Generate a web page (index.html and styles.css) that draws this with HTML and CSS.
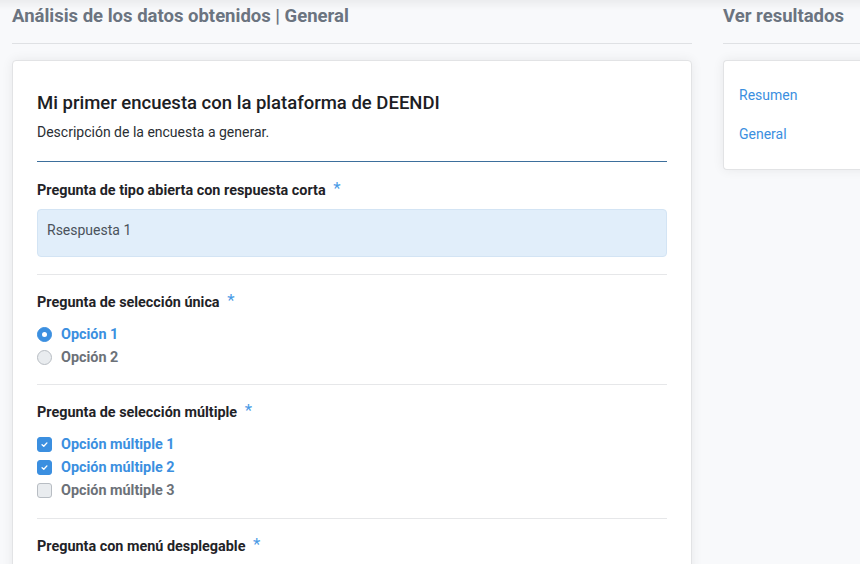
FILE: index.html
```html
<!DOCTYPE html>
<html lang="es">
<head>
<meta charset="utf-8">
<title>Análisis de los datos obtenidos</title>
<link rel="stylesheet" href="styles.css">
</head>
<body>
<div class="page">
  <main class="main-col">
    <h2 class="section-title">Análisis de los datos obtenidos | General</h2>
    <hr class="section-rule">
    <div class="card survey">
      <h1 class="survey-title">Mi primer encuesta con la plataforma de DEENDI</h1>
      <p class="survey-desc">Descripción de la encuesta a generar.</p>
      <div class="survey-rule"></div>

      <div class="question">
        <div class="q-label">Pregunta de tipo abierta con respuesta corta <span class="req">*</span></div>
        <div class="answer-box">Rsespuesta 1</div>
      </div>

      <div class="question">
        <div class="q-label">Pregunta de selección única <span class="req">*</span></div>
        <div class="options">
          <div class="opt checked"><span class="radio"></span>Opción 1</div>
          <div class="opt"><span class="radio"></span>Opción 2</div>
        </div>
      </div>

      <div class="question q-multi">
        <div class="q-label">Pregunta de selección múltiple <span class="req">*</span></div>
        <div class="options">
          <div class="opt checked"><span class="check"><svg viewBox="0 0 10 10" width="9" height="9"><path d="M2.3 5.2 L4.2 7 L7.7 3.2" fill="none" stroke="#fff" stroke-width="1.5" stroke-linecap="round" stroke-linejoin="round"/></svg></span>Opción múltiple 1</div>
          <div class="opt checked"><span class="check"><svg viewBox="0 0 10 10" width="9" height="9"><path d="M2.3 5.2 L4.2 7 L7.7 3.2" fill="none" stroke="#fff" stroke-width="1.5" stroke-linecap="round" stroke-linejoin="round"/></svg></span>Opción múltiple 2</div>
          <div class="opt"><span class="check"></span>Opción múltiple 3</div>
        </div>
      </div>

      <div class="question last">
        <div class="q-label">Pregunta con menú desplegable <span class="req">*</span></div>
      </div>
    </div>
  </main>
  <aside class="side-col">
    <h2 class="section-title">Ver resultados</h2>
    <hr class="section-rule">
    <div class="card side-card">
      <a class="side-link" href="#">Resumen</a>
      <a class="side-link" href="#">General</a>
    </div>
  </aside>
</div>
</body>
</html>
```
FILE: styles.css
```css
* { box-sizing: border-box; }
html, body { height: 100%; }
body {
  margin: 0;
  overflow: hidden;
  font-family: Roboto, "Liberation Sans", sans-serif;
  background: #f8f9fb;
  color: #212529;
}
body::before {
  content: "";
  position: fixed;
  left: 0; right: 0; top: 0;
  height: 10px;
  background: linear-gradient(rgba(0,0,0,0.05), rgba(0,0,0,0));
  pointer-events: none;
}
.page {
  display: flex;
  padding-left: 12px;
  gap: 31px;
}
.main-col { width: 680px; flex: none; }
.side-col { width: 170px; flex: none; }
.section-title {
  margin: 0;
  padding-top: 4px;
  font-size: 18.5px;
  line-height: 24px;
  font-weight: 700;
  color: #6b7480;
  white-space: nowrap;
}
.section-rule {
  margin: 15px 0 16px;
  border: 0;
  border-top: 1px solid #dfe1e4;
}
.card {
  background: #fff;
  border: 1px solid #e2e3e5;
  border-radius: 4px;
  box-shadow: 0 0 12px rgba(0,0,0,0.07);
}
.survey {
  padding: 30px 24px 0;
  min-height: 520px;
}
.survey-title {
  margin: 0;
  font-size: 18.5px;
  line-height: 24px;
  font-weight: 500;
  color: #1c2024;
}
.survey-desc {
  margin: 7px 0 0;
  font-size: 14px;
  line-height: 20px;
  color: #2a2e33;
}
.survey-rule {
  margin-top: 19px;
  border-top: 1px solid #3d6f9c;
}
.question {
  padding: 19px 0 17px;
  border-bottom: 1px solid #e6e7e9;
}
.question + .question { padding-top: 18px; padding-bottom: 15px; }
.question.q-multi { padding-bottom: 16px; }
.question.last { border-bottom: 0; }
.q-label {
  font-size: 14.4px;
  line-height: 20px;
  height: 20px;
  font-weight: 700;
  color: #1f2327;
}
.req {
  color: #4a9be6;
  font-size: 17px;
  line-height: 0;
  font-weight: 400;
  margin-left: 4px;
  position: relative;
  top: -1px;
}
.answer-box {
  margin-top: 8px;
  height: 48px;
  padding: 10px 9px;
  font-size: 14px;
  line-height: 20px;
  color: #4a525b;
  background: #e1eefa;
  border: 1px solid #d3e4f4;
  border-radius: 4px;
}
.options { margin-top: 10px; }
.opt {
  display: flex;
  align-items: center;
  height: 23px;
  font-size: 14.4px;
  font-weight: 700;
  color: #6c7178;
}
.opt.checked { color: #3b8fe0; }
.radio {
  width: 15px; height: 15px;
  border-radius: 50%;
  border: 1px solid #b8bdc3;
  background: #e9ecef;
  margin-right: 9px;
  flex: none;
  position: relative;
}
.opt.checked .radio {
  background: #3b8fe0;
  border-color: #3b8fe0;
}
.opt.checked .radio::after {
  content: "";
  position: absolute;
  left: 50%; top: 50%;
  width: 5px; height: 5px;
  margin: -2.5px 0 0 -2.5px;
  border-radius: 50%;
  background: #fff;
}
.check {
  width: 15px; height: 15px;
  border-radius: 3px;
  border: 1px solid #b8bdc3;
  background: #e9ecef;
  margin-right: 9px;
  flex: none;
  display: flex;
  align-items: center;
  justify-content: center;
}
.opt.checked .check {
  background: #3b8fe0;
  border-color: #3b8fe0;
}
.side-card {
  height: 110px;
  padding: 24px 16px 0 15px;
  display: flex;
  flex-direction: column;
  gap: 19px;
  border-right: 0;
  border-radius: 4px 0 0 4px;
}
.side-link {
  font-size: 14px;
  line-height: 20px;
  color: #3b8fe0;
  text-decoration: none;
}
```
